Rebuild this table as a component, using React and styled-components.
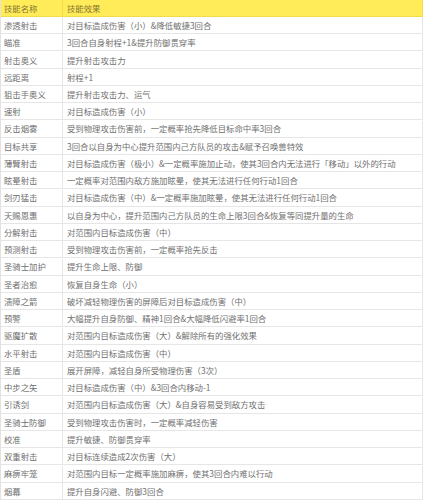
import styled, { createGlobalStyle } from 'styled-components';

const GlobalStyle = createGlobalStyle`
  body {
    margin: 0;
    background: #fff;
    font-family: 'Noto Sans CJK SC', 'Noto Sans', sans-serif;
  }
`;

const skills = [
    ['渗透射击', '对目标造成伤害（小）&降低敏捷3回合'],
    ['瞄准', '3回合自身射程+1&提升防御贯穿率'],
    ['射击奥义', '提升射击攻击力'],
    ['远距离', '射程+1'],
    ['狙击手奥义', '提升射击攻击力、运气'],
    ['速射', '对目标造成伤害（小）'],
    ['反击烟雾', '受到物理攻击伤害前，一定概率抢先降低目标命中率3回合'],
    ['目标共享', '3回合以自身为中心提升范围内己方队员的攻击&赋予召唤兽特效'],
    ['薄臂射击', '对目标造成伤害（极小）&一定概率施加止动，使其3回合内无法进行「移动」以外的行动'],
    ['眩晕射击', '一定概率对范围内敌方施加眩晕，使其无法进行任何行动1回合'],
    ['剑刃猛击', '对目标造成伤害（中）&一定概率施加眩晕，使其无法进行任何行动1回合'],
    ['天赐恩惠', '以自身为中心，提升范围内己方队员的生命上限3回合&恢复等同提升量的生命'],
    ['分解射击', '对范围内目标造成伤害（中）'],
    ['预测射击', '受到物理攻击伤害前，一定概率抢先反击'],
    ['圣骑士加护', '提升生命上限、防御'],
    ['圣者治愈', '恢复自身生命（小）'],
    ['溃障之箭', '破坏减轻物理伤害的屏障后对目标造成伤害（中）'],
    ['预警', '大幅提升自身防御、精神1回合&大幅降低闪避率1回合'],
    ['驱魔扩散', '对范围内目标造成伤害（大）&解除所有的强化效果'],
    ['水平射击', '对范围内目标造成伤害（中）'],
    ['圣盾', '展开屏障，减轻自身所受物理伤害（3次）'],
    ['中步之矢', '对目标造成伤害（中）&3回合内移动-1'],
    ['引诱剑', '对范围内目标造成伤害（大）&自身容易受到敌方攻击'],
    ['圣骑士防御', '受到物理攻击伤害时，一定概率减轻伤害'],
    ['校准', '提升敏捷、防御贯穿率'],
    ['双重射击', '对目标连续造成2次伤害（大）'],
    ['麻痹牢笼', '对范围内目标一定概率施加麻痹，使其3回合内难以行动'],
    ['烟幕', '提升自身闪避、防御3回合'],
];

const Table = styled.div`
  display: grid;
  grid-template-columns: 62px 1fr;
  width: 423px;
  height: 500px;
  overflow: hidden;
  border-left: 1px solid #e2e2e2;
  box-sizing: border-box;
`;

const Cell = styled.div`
  height: 17px;
  box-sizing: border-box;
  padding-left: ${p => (p.$first ? 3 : 4)}px;
  display: flex;
  align-items: center;
  font-size: 8.4px;
  line-height: 1;
  white-space: nowrap;
  overflow: hidden;
  color: ${p => (p.$head ? '#857536' : '#707070')};
  background: ${p => (p.$head ? '#ffec58' : '#ffffff')};
  border-bottom: 1px solid ${p => (p.$head ? '#f2dc4a' : '#e6e6e6')};
  border-right: 1px solid ${p => (p.$head ? '#f2dc4a' : '#e6e6e6')};
`;

export default function App() {
    return (
        <>
            <GlobalStyle />
            <Table>
                <Cell $head $first>技能名称</Cell>
                <Cell $head>技能效果</Cell>
                {skills.map(([name, effect]) => [
                    <Cell key={name + 'n'} $first>{name}</Cell>,
                    <Cell key={name + 'e'}>{effect}</Cell>,
                ])}
            </Table>
        </>
    );
}
